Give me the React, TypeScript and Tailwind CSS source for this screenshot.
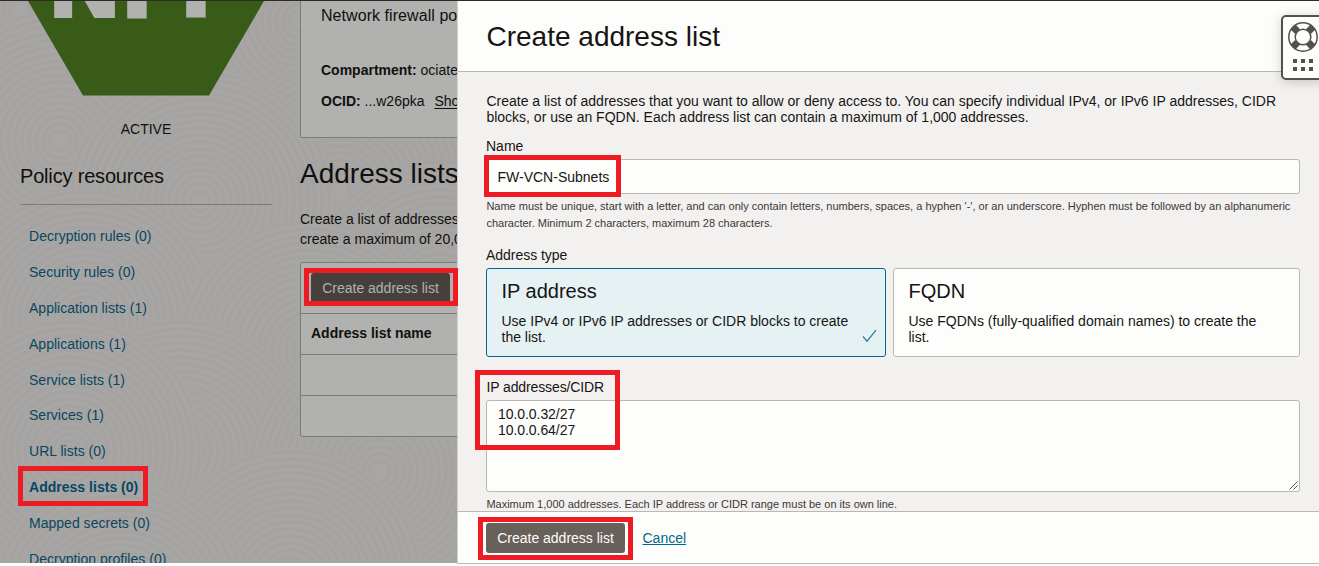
import type { ReactNode } from "react";

const RINGS = [10, 17, 24, 31, 38, 45, 52, 59, 66, 73, 80, 87, 94, 101, 108, 115, 122, 129];
const DISCS: [number, number][] = [
  [20, 10], [300, 20], [420, 130], [60, 140], [340, 190], [200, 200], [440, 290],
  [85, 320], [310, 350], [180, 450], [10, 500], [380, 470], [70, 450], [290, 580], [120, 610],
];

const RESOURCES = [
  { label: "Decryption rules (0)" },
  { label: "Security rules (0)" },
  { label: "Application lists (1)" },
  { label: "Applications (1)" },
  { label: "Service lists (1)" },
  { label: "Services (1)" },
  { label: "URL lists (0)" },
  { label: "Address lists (0)", active: true },
  { label: "Mapped secrets (0)" },
  { label: "Decryption profiles (0)" },
];

function Texture() {
  return (
    <svg className="absolute inset-0" width="458" height="562" aria-hidden="true">
      {DISCS.map(([x, y], i) => (
        <g key={i}>
          <circle cx={x} cy={y} r="133" fill="#a7a6a4" />
          {RINGS.map((r) => (
            <circle key={r} cx={x} cy={y} r={r} fill="none" stroke="#a09f9d" strokeOpacity="0.28" strokeWidth="3" />
          ))}
        </g>
      ))}
    </svg>
  );
}

function Highlight({ className }: { className: string }) {
  return <div className={`pointer-events-none absolute z-20 border-[5px] border-[#ed1c24] ${className}`} />;
}

function PolicyBadge() {
  return (
    <div className="relative h-[95px] w-full overflow-hidden">
      <svg className="absolute inset-0" width="300" height="95" aria-hidden="true">
        <path d="M28 0H264L209 94.6H83Z" fill="#385b18" />
      </svg>
      <div className="absolute top-[-64px] left-[51px] flex text-[93px] leading-[93px] font-bold text-[#b1b1af] [-webkit-text-stroke:6px_#b1b1af]">
        <span className="w-[73px]">N</span>
        <span className="w-[59px]">F</span>
        <span>P</span>
      </div>
    </div>
  );
}

function Sidebar() {
  return (
    <aside className="w-[300px] shrink-0">
      <PolicyBadge />
      <div className="mt-[23px] pr-[8px] text-center text-[14px] leading-[20px]">ACTIVE</div>
      <div className="mr-[28px] ml-[20px] border-b border-[#7d7b79] pt-[24px] pb-[15px] text-[20px] leading-[26px] tracking-[-0.18px]">
        Policy resources
      </div>
      <ul className="mt-[14px] pl-[29px] text-[14px] leading-[35.87px] tracking-[0.02px] text-[#084660]">
        {RESOURCES.map((r) => (
          <li key={r.label} className={r.active ? "font-bold" : ""}>{r.label}</li>
        ))}
      </ul>
    </aside>
  );
}

function MainContent() {
  return (
    <main className="w-[600px] shrink-0">
      <section className="h-[137px] rounded-b-[2px] border border-t-0 border-[#7d7b79] bg-[#b1b1af] pt-[3px] pl-[20px]">
        <div className="text-[16px] leading-[24px] tracking-[0.06px]">Network firewall po</div>
        <div className="mt-[32px] text-[14px] leading-[20px]"><b>Compartment:</b> ociate</div>
        <div className="mt-[11px] text-[14px] leading-[20px]">
          <b>OCID:</b> ...w26pka <span className="ml-[6px] underline underline-offset-2">Sho</span>
        </div>
      </section>
      <h2 className="mt-[18px] text-[28px] leading-[36px]">Address lists</h2>
      <p className="mt-[17px] text-[14px] leading-[20px]">
        Create a list of addresses
        <br />
        create a maximum of 20,0
      </p>
      <section className="mt-[13px] h-[175px] rounded-[3px] border border-[#7d7b79] bg-[#b1b1af]">
        <div className="h-[51px] border-b border-[#7d7b79] pt-[10px] pl-[10px]">
          <div className="flex h-[30px] w-[139px] items-center justify-center rounded-[3px] bg-[#46403d] text-[14px] text-[#b1b1af]">
            Create address list
          </div>
        </div>
        <div className="h-[41px] border-b border-[#7d7b79] pl-[10px] text-[14px] leading-[39px] font-bold">
          Address list name
        </div>
        <div className="h-[41px] border-b border-[#7d7b79]" />
      </section>
    </main>
  );
}

function TypeCard({ title, selected, width, children }: { title: string; selected?: boolean; width: string; children: ReactNode }) {
  return (
    <div
      className={`relative h-[89px] rounded-[3px] border pt-[9px] pl-[14.5px] ${width} ${
        selected ? "border-[#00688c] bg-[#e6f1f3]" : "border-[#bbb8b4] bg-[#fdfdfb]"
      }`}
    >
      <div className="text-[20px] leading-[26px]">{title}</div>
      <div className="mt-[9px] text-[14px] leading-[16px]">{children}</div>
      {selected && (
        <svg className="absolute right-[8px] bottom-[13px]" width="15" height="14" fill="none" stroke="#227e9e" strokeWidth="1.2" aria-hidden="true">
          <path d="M1 7.5L5 12.2L14 1.2" />
        </svg>
      )}
    </div>
  );
}

function HelpWidget() {
  return (
    <div className="absolute top-[14px] left-[1281px] z-10 flex h-[65px] w-[48px] flex-col rounded-[5px] border-2 border-[#54504d] bg-[#fdfdfb] pt-[5px] pl-[5px] shadow-[0_2px_12px_rgba(0,0,0,0.18)]">
      <svg width="30" height="30" viewBox="0 0 30 30" fill="none" stroke="#54504d" aria-hidden="true">
        <path d="M4.8 4.8L9.6 9.6M25.2 4.8L20.4 9.6M4.8 25.2L9.6 20.4M25.2 25.2L20.4 20.4" strokeWidth="7" />
        <circle cx="15" cy="15" r="14.2" strokeWidth="1.5" />
        <circle cx="15" cy="15" r="7.8" strokeWidth="1.5" fill="#fdfdfb" />
      </svg>
      <div className="mt-[7px] ml-[5px] grid w-[20px] grid-cols-3 gap-[4px]">
        {[0, 1, 2, 3, 4, 5].map((n) => (
          <i key={n} className="size-[4px] bg-[#54504d]" />
        ))}
      </div>
    </div>
  );
}

function Drawer() {
  return (
    <div className="flex h-[563px] w-[862px] shrink-0 flex-col overflow-hidden border-b border-l border-[#bbb8b4] border-l-[#d2d0ce] bg-[#f3f1f0]">
      <header className="h-[71px] shrink-0 border-b border-[#bbb8b4] bg-[#fdfdfb] pt-[18px] pl-[28.5px] text-[28px] leading-[36px]">
        Create address list
      </header>
      <div className="h-[439px] shrink-0 overflow-hidden pr-[19px] pl-[28px] text-[14px] leading-[16px]">
        <p className="pt-[21px] pl-[0.4px] whitespace-nowrap">
          Create a list of addresses that you want to allow or deny access to. You can specify individual IPv4, or IPv6 IP addresses, CIDR
          <br />
          blocks, or use an FQDN. Each address list can contain a maximum of 1,000 addresses.
        </p>
        <div className="mt-[13px]">Name</div>
        <div className="mt-[5px] h-[35px] rounded-[3px] border border-[#bbb8b4] bg-[#fdfdfb] pl-[10.5px] leading-[34px]">FW-VCN-Subnets</div>
        <p className="mt-[4px] pl-[0.4px] text-[11px] leading-[17px] whitespace-nowrap text-[#3a3836]">
          Name must be unique, start with a letter, and can only contain letters, numbers, spaces, a hyphen '-', or an underscore. Hyphen must be followed by an alphanumeric
          <br />
          character. Minimum 2 characters, maximum 28 characters.
        </p>
        <div className="mt-[15px] tracking-[-0.03px]">Address type</div>
        <div className="mt-[5px] flex gap-[7px]">
          <TypeCard title="IP address" width="w-[400px]" selected>
            Use IPv4 or IPv6 IP addresses or CIDR blocks to create
            <br />
            the list.
          </TypeCard>
          <TypeCard title="FQDN" width="w-[407px]">
            Use FQDNs (fully-qualified domain names) to create the
            <br />
            list.
          </TypeCard>
        </div>
        <div className="mt-[22px] pl-[0.5px] tracking-[-0.12px]">IP addresses/CIDR</div>
        <div className="relative mt-[5px] h-[92px] rounded-[3px] border border-[#bbb8b4] bg-[#fdfdfb] pt-[5px] pl-[11px] tracking-[-0.06px]">
          10.0.0.32/27
          <br />
          10.0.0.64/27
          <svg className="absolute right-[1px] bottom-[1px]" width="9" height="9" stroke="#4a4a4a" strokeWidth="0.9" aria-hidden="true">
            <path d="M0.5 8.5L8.5 0.5M4.5 8.5L8.5 4.5" />
          </svg>
        </div>
        <p className="mt-[4px] pl-[0.4px] text-[11px] leading-[17px] text-[#3a3836]">
          Maximum 1,000 addresses. Each IP address or CIDR range must be on its own line.
        </p>
      </div>
      <footer className="flex grow items-center border-t border-[#bbb8b4] bg-[#fdfdfb] pl-[28px] text-[14px]">
        <button className="h-[30px] w-[139px] rounded-[3px] bg-[#67605b] pt-[2px] text-[#fdfdfb]">Create address list</button>
        <a className="ml-[17.5px] pt-[2px] text-[#00688c] underline underline-offset-1">Cancel</a>
      </footer>
    </div>
  );
}

export default function App() {
  return (
    <div className="relative h-[566px] w-[1319px] overflow-hidden border-t border-[#2f2a2a] bg-[#fdfdfb] font-['Liberation_Sans',Arial,sans-serif] text-[#161513]">
      <div className="flex">
        <div className="relative h-[562px] w-[457px] shrink-0 overflow-hidden bg-[#a7a6a4] text-[#10100e]">
          <Texture />
          <div className="relative flex">
            <Sidebar />
            <MainContent />
          </div>
        </div>
        <Drawer />
      </div>
      <HelpWidget />
      <Highlight className="top-[465px] left-[18px] h-[40px] w-[130px]" />
      <Highlight className="top-[267px] left-[304px] h-[38px] w-[154px]" />
      <Highlight className="top-[154px] left-[484px] h-[42px] w-[137px]" />
      <Highlight className="top-[369px] left-[475px] h-[80px] w-[145px]" />
      <Highlight className="top-[516px] left-[478px] h-[43px] w-[155px]" />
    </div>
  );
}
